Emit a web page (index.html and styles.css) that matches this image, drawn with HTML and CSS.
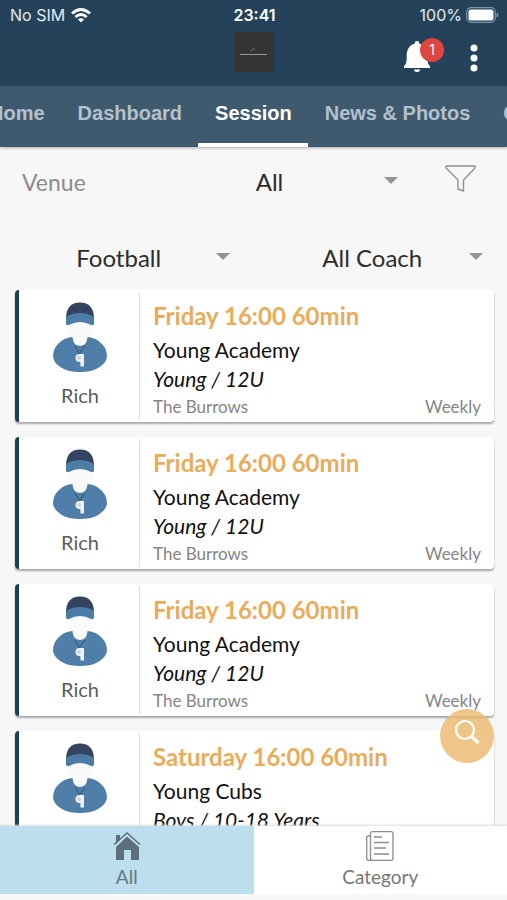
FILE: index.html
```html
<!DOCTYPE html>
<html lang="en">
<head>
<meta charset="utf-8">
<meta name="viewport" content="width=device-width, initial-scale=1">
<title>Session</title>
<link rel="stylesheet" href="styles.css">
</head>
<body>
<svg class="defs" aria-hidden="true">
  <symbol id="coach" viewBox="0 0 54 70">
    <path fill="#fafafa" d="M15 20h25v13a12 12 0 0 1-25 0z"/>
    <path fill="#4f7fa8" d="M19.500 35Q20 43.500 27 44 34 43.500 34.500 35 44 36 49 42 54 47 54 55 53 61 46 65.500 39 70 27 70 15 70 8 65.500 1 61 0 55 0 47 5 42 10 36 19.500 35z"/>
    <path fill="#34435f" d="M13 17Q13 .5 27 .5 41 .5 41 17L27 14z"/>
    <path fill="#4b7ca6" d="M13 15Q19 11 27 11 35 11 41 15V22Q40 24 37 22.500 33 20 27 20 21 20 17 22.500 14 24 13 22z"/>
    <path fill="none" stroke="#34536f" d="M22 44l4.500 7.500L32 44"/>
    <circle cx="26.500" cy="56" r="4" fill="#eef2f6"/>
    <path fill="#eef2f6" d="M27 52h4v12.500h-3.500z"/>
    <circle cx="26" cy="56" r="2" fill="#ccd7e2"/>
  </symbol>
</svg>

<header class="top">
  <div class="status">
    <div class="carrier">No SIM
      <svg width="20" height="15" viewBox="0 0 20 15" aria-hidden="true"><g fill="none" stroke="#fff" stroke-width="2.800"><path d="M1 5.500Q10-2.500 19 5.500"/><path d="M4.300 9Q10 4 15.700 9"/></g><path fill="#fff" d="M6.900 11.300Q10 9 13.100 11.300L10 14.600z"/></svg>
    </div>
    <div class="clock">23:41</div>
    <div class="power">100%
      <svg width="33" height="16" viewBox="0 0 33 16" aria-hidden="true"><rect x=".7" y=".7" width="28.600" height="14.600" rx="4.500" fill="none" stroke="#7f95a5" stroke-width="1.200"/><rect x="2.500" y="2.500" width="25" height="11" rx="2.500" fill="#fff"/><path fill="#7f95a5" d="M30.500 5.500q2 .5 2 2.500t-2 2.500z"/></svg>
    </div>
  </div>
  <div class="bar">
    <a class="logo" href="#" aria-label="Club home">
      <svg width="40" height="40" viewBox="0 0 40 40" aria-hidden="true"><path fill="none" stroke="#777" d="M21 17q-3-1-4 2"/><path stroke="#999" d="M6 22.500h27"/></svg>
    </a>
    <div class="actions">
      <button class="bell" aria-label="Notifications">
        <svg width="26" height="32" viewBox="0 0 26 32" aria-hidden="true"><path fill="#fff" d="M13 0a2.200 2.200 0 0 1 2.200 2.500Q23 5 23.300 13v6q.2 4 2.700 6v2H0v-2q2.500-2 2.700-6v-6Q3 5 10.800 2.500A2.200 2.200 0 0 1 13 0zM10 28.500h6a3 2.500 0 0 1-6 0z"/></svg>
        <span class="badge">1</span>
      </button>
      <button class="more" aria-label="More">
        <svg width="8" height="28" viewBox="0 0 8 28" aria-hidden="true"><g fill="#fff"><circle cx="4" cy="4" r="3.500"/><circle cx="4" cy="14" r="3.500"/><circle cx="4" cy="24" r="3.500"/></g></svg>
      </button>
    </div>
  </div>
</header>

<nav class="tabs">
  <a href="#">Home</a>
  <a href="#">Dashboard</a>
  <a class="active" href="#">Session</a>
  <a href="#">News &amp; Photos</a>
  <a href="#">Club</a>
</nav>

<main>
  <form class="filters">
    <div class="row venue">
      <label for="venue">Venue</label>
      <div class="pick"><select id="venue"><option>All</option></select></div>
      <button type="button" class="funnel" aria-label="Filter">
        <svg width="31" height="27" viewBox="0 0 31 27" aria-hidden="true"><path fill="none" stroke="#919191" stroke-width="1.400" stroke-linejoin="round" d="M1 1h29v2L18.500 15v11L13 24V15L1 3z"/></svg>
      </button>
    </div>
    <div class="row pair">
      <div class="pick"><select aria-label="Sport"><option>Football</option></select></div>
      <div class="pick"><select aria-label="Coach"><option>All Coach</option></select></div>
    </div>
  </form>

  <div class="list">
    <article class="card">
      <div class="who"><svg width="54" height="70" aria-hidden="true"><use href="#coach"/></svg><span>Rich</span></div>
      <div class="info">
        <h2>Friday 16:00 60min</h2>
        <p>Young Academy</p>
        <p><em>Young / 12U</em></p>
        <div class="foot"><span>The Burrows</span><span>Weekly</span></div>
      </div>
    </article>
    <article class="card">
      <div class="who"><svg width="54" height="70" aria-hidden="true"><use href="#coach"/></svg><span>Rich</span></div>
      <div class="info">
        <h2>Friday 16:00 60min</h2>
        <p>Young Academy</p>
        <p><em>Young / 12U</em></p>
        <div class="foot"><span>The Burrows</span><span>Weekly</span></div>
      </div>
    </article>
    <article class="card">
      <div class="who"><svg width="54" height="70" aria-hidden="true"><use href="#coach"/></svg><span>Rich</span></div>
      <div class="info">
        <h2>Friday 16:00 60min</h2>
        <p>Young Academy</p>
        <p><em>Young / 12U</em></p>
        <div class="foot"><span>The Burrows</span><span>Weekly</span></div>
      </div>
    </article>
    <article class="card">
      <div class="who"><svg width="54" height="70" aria-hidden="true"><use href="#coach"/></svg></div>
      <div class="info">
        <h2>Saturday 16:00 60min</h2>
        <p>Young Cubs</p>
        <p><em>Boys / 10-18 Years</em></p>
      </div>
    </article>
  </div>
  <button class="search" aria-label="Search">
    <svg width="26" height="26" viewBox="0 0 26 26" aria-hidden="true"><circle cx="11" cy="11" r="9" fill="none" stroke="#fff" stroke-width="2.200"/><path stroke="#fff" stroke-width="3.200" d="M17 17l7.500 7"/></svg>
  </button>
</main>

<nav class="bottom">
  <a class="current" href="#">
    <svg width="28" height="30" viewBox="0 0 28 30" aria-hidden="true"><path fill="#5e6f7b" d="M3 4h4v5L3 13zM14 5.500L26 16v13h-8V19h-7v10H3V16z"/><path fill="none" stroke="#5e6f7b" stroke-width="1.500" d="M1 13.500L14 2l13 11.500"/></svg>
    All
  </a>
  <a href="#">
    <svg width="28" height="30" viewBox="0 0 28 30" aria-hidden="true"><g fill="none" stroke="#8c8c8c" stroke-width="1.300"><rect x="4.500" y=".7" width="22.500" height="28.600" rx="2"/><path d="M4.500 5H2.500Q.7 5 .7 7v20q0 2.300 2.500 2.300H6M8 6h8M8 11.500h15M8 17h12M8 23h15"/></g></svg>
    Category
  </a>
</nav>
</body>
</html>
```
FILE: styles.css
```css
* {
  box-sizing: border-box;
}

body {
  margin: 0;
  height: 100vh;
  display: flex;
  flex-direction: column;
  overflow: hidden;
  background: #f7f7f7;
  font-family: Lato, "Liberation Sans", sans-serif;
  color: #111;
}

a {
  color: inherit;
  text-decoration: none;
}

button {
  border: 0;
  padding: 0;
  background: none;
  cursor: pointer;
}

svg {
  display: block;
}

.defs {
  position: absolute;
  width: 0;
  height: 0;
}

.top {
  background: #24435a;
  color: #fff;
}

.status {
  display: grid;
  grid-template-columns: 1fr auto 1fr;
  height: 30px;
  padding: 0 8px 0 10px;
  align-items: center;
  font: 16px/30px Inter, sans-serif;
}

.carrier,
.power {
  display: flex;
  align-items: center;
  gap: 6px;
  color: #e4eaee;
}

.power {
  justify-content: flex-end;
  gap: 4px;
}

.clock {
  font-weight: 600;
}

.bar {
  display: grid;
  grid-template-columns: 1fr 40px 1fr;
  height: 57px;
  padding-top: 2px;
}

.logo {
  grid-column: 2;
  width: 40px;
  height: 40px;
  background: #343434;
}

.actions {
  display: flex;
  justify-content: flex-end;
  align-items: flex-start;
  gap: 40px;
  padding: 9px 29px 0 0;
}

.bell {
  position: relative;
}

.badge {
  position: absolute;
  top: -3px;
  left: 16px;
  width: 24px;
  height: 24px;
  border-radius: 50%;
  background: #de4740;
  color: #fff;
  font: 14px/24px Inter, sans-serif;
}

.more {
  padding-top: 3px;
}

.tabs {
  display: flex;
  flex: none;
  height: 60px;
  overflow: hidden;
  background: #3f5a6e;
  color: #b3c1cd;
  font: bold 20px/52px "Liberation Sans", sans-serif;
  white-space: nowrap;
  box-shadow: 0 1px 3px #aaa;
  z-index: 1;
}

.tabs a {
  flex: none;
  padding: 0 16px 0 17px;
}

.tabs a:first-child {
  margin-left: -28px;
}

.tabs .active {
  color: #fff;
  border-bottom: 4px solid #fff;
}

main {
  position: relative;
  flex: 1;
  min-height: 0;
  overflow: hidden;
}

.row {
  display: grid;
  align-items: center;
}

.venue {
  grid-template-columns: 133px 1fr 85px;
  height: 70px;
}

.venue label {
  padding-left: 22px;
  color: #8c8c8c;
  font-size: 23px;
  line-height: 28px;
}

.pair {
  grid-template-columns: 1fr 1fr;
  height: 73px;
  padding-top: 8px;
}

.pick {
  position: relative;
}

.pick::after {
  content: "";
  position: absolute;
  top: 50%;
  right: 24px;
  margin-top: -5px;
  border: solid transparent;
  border-width: 7px 7px 0;
  border-top-color: #949494;
  pointer-events: none;
}

.pick select {
  width: 100%;
  height: 40px;
  padding: 0 16px 0 0;
  border: 0;
  appearance: none;
  background: none;
  color: #2c2c2c;
  font: 24px/40px Lato, sans-serif;
  text-align: center;
  text-align-last: center;
}

.funnel {
  display: flex;
  padding: 0 0 8px 23px;
}

.list {
  display: grid;
  gap: 15px;
  padding: 0 13px 0 15px;
}

.card {
  display: grid;
  grid-template-columns: 121px 1fr;
  height: 132px;
  border-left: 4px solid #1b3f58;
  border-radius: 4px;
  background: #fff;
  box-shadow: 0 2px 2px #a9a9a9;
}

.who {
  display: flex;
  flex-direction: column;
  align-items: center;
  gap: 11px;
  margin: 2px 0;
  padding: 10px 0 0 2px;
  border-right: 1px solid #dedede;
  color: #5c5c5c;
  font-size: 20px;
  line-height: 24px;
}

.info {
  padding: 11px 13px 0;
}

.info h2 {
  margin: 0 0 4px;
  color: #e9ac5a;
  font-size: 24px;
  line-height: 30px;
}

.info p {
  margin: 0;
  font-size: 21px;
  line-height: 29px;
}

.foot {
  display: flex;
  justify-content: space-between;
  color: #858585;
  font-size: 17px;
  line-height: 28px;
}

.search {
  position: absolute;
  right: 13px;
  bottom: 63px;
  width: 54px;
  height: 54px;
  padding: 0 0 8px 14px;
  border-radius: 50%;
  background: rgba(236, 186, 112, 0.82);
}

.bottom {
  display: grid;
  grid-template-columns: 1fr 1fr;
  flex: none;
  margin-bottom: 6px;
  background: #fff;
  color: #777;
  font-size: 19px;
  line-height: 24px;
  box-shadow: 0 -1px 2px #ddd;
  z-index: 1;
}

.bottom a {
  display: flex;
  flex-direction: column;
  align-items: center;
  gap: 4px;
  padding: 5px 0;
}

.bottom .current {
  background: #bddeec;
  color: #667782;
}
```
